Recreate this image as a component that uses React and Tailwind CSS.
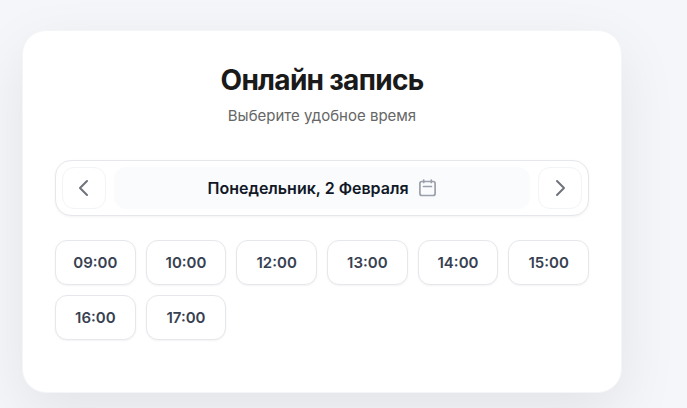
import React, { useState } from 'react';

const slots = [
  '09:00',
  '10:00',
  '12:00',
  '13:00',
  '14:00',
  '15:00',
  '16:00',
  '17:00',
];

const days = ['Воскресенье', 'Понедельник', 'Вторник', 'Среда', 'Четверг', 'Пятница', 'Суббота'];
const months = [
  'Января',
  'Февраля',
  'Марта',
  'Апреля',
  'Мая',
  'Июня',
  'Июля',
  'Августа',
  'Сентября',
  'Октября',
  'Ноября',
  'Декабря',
];

function NavButton({ label, path, onClick }) {
  return (
    <button
      type="button"
      aria-label={label}
      onClick={onClick}
      className="flex h-[42px] w-11 shrink-0 cursor-pointer items-center justify-center rounded-xl border border-[#f3f4f6] bg-white text-[#6f737c]"
    >
      <svg
        width="20"
        height="20"
        viewBox="0 0 20 20"
        fill="none"
        stroke="currentColor"
        strokeWidth="2"
        strokeLinecap="round"
        strokeLinejoin="round"
      >
        <path d={path} />
      </svg>
    </button>
  );
}

function CalendarIcon() {
  return (
    <svg
      width="18"
      height="18"
      viewBox="0 0 18 18"
      fill="none"
      stroke="#9ca0ab"
      strokeWidth="1.7"
      strokeLinecap="round"
      strokeLinejoin="round"
    >
      <rect x="0.9" y="2.5" width="15.2" height="14" rx="2" />
      <path d="M4.7 1v2.5M12.3 1v2.5M4.5 7.5h8" />
    </svg>
  );
}

function App() {
  const [date, setDate] = useState(new Date(2026, 1, 2));
  const [selected, setSelected] = useState(null);

  const moveDay = (step) => {
    const next = new Date(date);
    next.setDate(next.getDate() + step);
    setDate(next);
    setSelected(null);
  };

  return (
    <div className="min-h-screen bg-[#f4f6fa] pt-[30px] pr-[65px] pb-4 pl-[22px] font-[Inter,sans-serif]">
      <main className="w-full max-w-[600px] rounded-3xl border border-[#f4f5f6] bg-white px-8 pt-8 pb-[52px] shadow-[0_20px_60px_rgba(0,0,0,0.08)]">
        <header className="mb-[33px] text-center">
          <h1 className="text-[28px] leading-[34px] font-bold tracking-tight text-[#1a1a1a]">
            Онлайн запись
          </h1>
          <p className="mt-2 text-[15px] leading-[22px] text-[#666666]">
            Выберите удобное время
          </p>
        </header>

        <div className="mb-6 flex items-center gap-2 rounded-2xl border border-[#e5e7eb] bg-white p-1.5 shadow-[0_1px_3px_rgba(0,0,0,0.05)]">
          <NavButton
            label="Предыдущий день"
            path="M13 3L6 10L13 17"
            onClick={() => moveDay(-1)}
          />
          <button
            type="button"
            className="flex h-[42px] min-w-0 flex-1 cursor-pointer items-center justify-center gap-2.5 rounded-xl bg-[#f9fbfd] text-base font-semibold text-[#111827]"
          >
            {days[date.getDay()]}, {date.getDate()} {months[date.getMonth()]}
            <CalendarIcon />
          </button>
          <NavButton
            label="Следующий день"
            path="M7 3L14 10L7 17"
            onClick={() => moveDay(1)}
          />
        </div>

        <div className="grid grid-cols-6 gap-2.5">
          {slots.map((time) => (
            <button
              key={time}
              type="button"
              aria-pressed={selected === time}
              onClick={() => setSelected(time)}
              className={`h-[45px] cursor-pointer rounded-xl border text-[15px] leading-[23px] font-semibold shadow-[0_1px_2px_rgba(0,0,0,0.05)] ${
                selected === time
                  ? 'border-[#111827] bg-[#111827] text-white'
                  : 'border-[#e5e7eb] bg-white text-[#374151]'
              }`}
            >
              {time}
            </button>
          ))}
        </div>
      </main>
    </div>
  );
}

export default App;
